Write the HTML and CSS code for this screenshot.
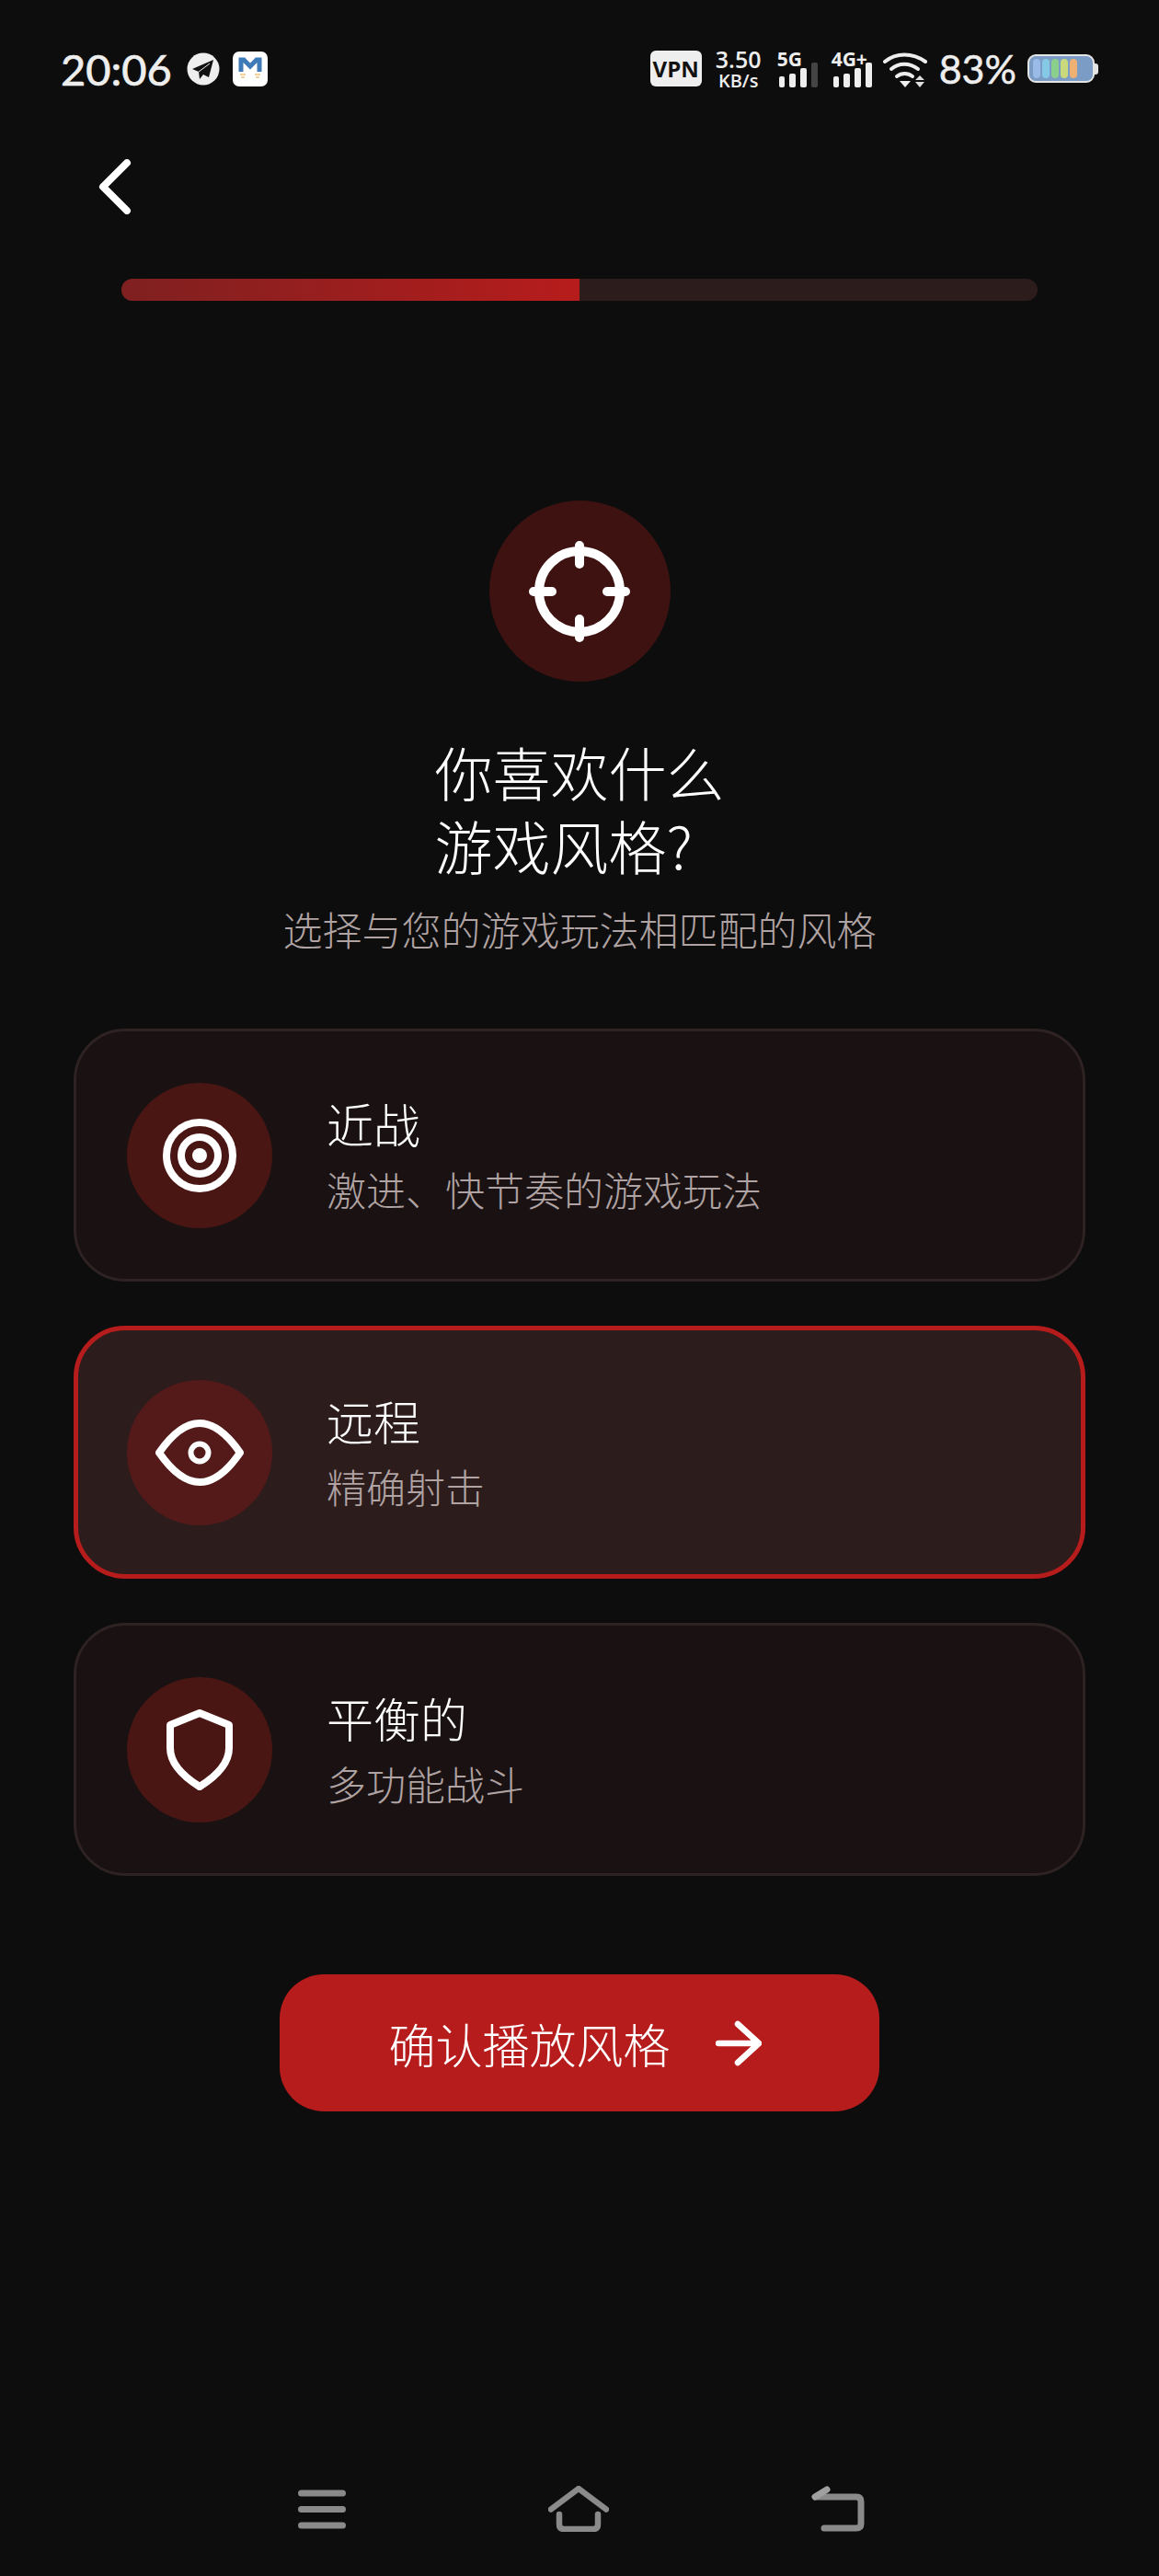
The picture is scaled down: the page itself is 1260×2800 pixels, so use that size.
FILE: index.html
```html
<!DOCTYPE html>
<html>
<head>
  <title>游戏风格</title>
  <meta charset="UTF-8">
  <link rel="stylesheet" href="styles.css">
</head>
<body>
  <div class="page">
    <div class="status-bar">
      <span class="time">20:06</span>
      <svg class="tg-icon" viewBox="0 0 36 36">
        <circle cx="18" cy="18" r="17.5" fill="#eee"/>
        <path d="M29 8 L6 18 L13 21 L14 29 L18 24 L24 27 Z" fill="#111"/>
        <path d="M13 21 L25 12" stroke="#eee" stroke-width="1" fill="none"/>
      </svg>
      <svg class="m-icon" viewBox="0 0 38 38">
        <rect width="38" height="38" rx="7" fill="#fff"/>
        <path d="M9 22 V9 H12 L19 16 L26 9 H29 V22" stroke="#3f7ab8" stroke-width="5" fill="none"/>
        <path d="M8 25 H14 M9 28 H13 M24 25 H30 M25 28 H29" stroke="#e8a838" stroke-width="1.2"/>
      </svg>
      <div class="status-right">
        <span class="vpn">VPN</span>
        <div class="speed"><b>3.50</b><small>KB/s</small></div>
        <div class="signal sig-5g">
          <span class="sig-label">5G</span>
          <i class="b1"></i><i class="b2"></i><i class="b3"></i><i class="b4 off"></i>
        </div>
        <div class="signal sig-4g">
          <span class="sig-label">4G+</span>
          <i class="b1"></i><i class="b2"></i><i class="b3"></i><i class="b4"></i>
        </div>
        <svg class="wifi" viewBox="0 0 50 38">
          <g fill="none" stroke="#eee" stroke-width="4" stroke-linecap="round">
            <path d="M2 10 C14 0 32 0 46 10"/>
            <path d="M9 18 C17 11 29 11 38 18"/>
            <path d="M15 26 C20 22 27 22 32 26"/>
          </g>
          <path d="M18 31 H30 L24 38 Z" fill="#eee"/>
          <path d="M40 25 L45 30 H35 Z M35 32 H45 L40 38 Z" fill="#ddd"/>
        </svg>
        <span class="batt-text">83%</span>
        <div class="battery">
          <div class="batt-body">
            <i class="c1"></i><i class="c2"></i><i class="c3"></i><i class="c4"></i><i class="c5"></i>
          </div>
          <div class="batt-cap"></div>
        </div>
      </div>
    </div>

    <div class="back-row">
      <svg class="back" viewBox="0 0 36 60">
        <path d="M31 4 L5 30 L31 56" fill="none" stroke="#fff" stroke-width="8" stroke-linecap="round" stroke-linejoin="round"/>
      </svg>
    </div>

    <div class="progress"><div class="progress-fill"></div></div>

    <div class="hero-icon">
      <svg width="110" height="110" viewBox="0 0 110 110">
        <g fill="none" stroke="#fff" stroke-width="10" stroke-linecap="round">
          <circle cx="55" cy="55" r="44"/>
          <path d="M5 55 H25 M85 55 H105 M55 5 V25 M55 85 V105"/>
        </g>
      </svg>
    </div>

    <h1 class="title">你喜欢什么<br>游戏风格?</h1>
    <p class="subtitle">选择与您的游戏玩法相匹配的风格</p>

    <div class="options">
      <div class="option">
        <div class="option-icon">
          <svg width="80" height="80" viewBox="0 0 80 80">
            <g fill="none" stroke="#fff" stroke-width="8">
              <circle cx="40" cy="40" r="36"/>
              <circle cx="40" cy="40" r="20"/>
            </g>
            <circle cx="40" cy="40" r="8" fill="#fff"/>
          </svg>
        </div>
        <div class="option-text">
          <div class="option-name">近战</div>
          <div class="option-desc">激进、快节奏的游戏玩法</div>
        </div>
      </div>

      <div class="option selected">
        <div class="option-icon">
          <svg width="96" height="72" viewBox="0 0 96 72">
            <path d="M4 36 C20 13 35 4 48 4 C61 4 76 13 92 36 C76 59 61 68 48 68 C35 68 20 59 4 36 Z" fill="none" stroke="#fff" stroke-width="8" stroke-linejoin="round"/>
            <circle cx="48" cy="36" r="9.500" fill="none" stroke="#fff" stroke-width="6"/>
          </svg>
        </div>
        <div class="option-text">
          <div class="option-name">远程</div>
          <div class="option-desc">精确射击</div>
        </div>
      </div>

      <div class="option">
        <div class="option-icon">
          <svg width="72" height="88" viewBox="0 0 72 88">
            <path d="M36 4 L68 17 V42 C68 60 52 74 36 84 C20 74 4 60 4 42 V17 Z" fill="none" stroke="#fff" stroke-width="8" stroke-linejoin="round"/>
          </svg>
        </div>
        <div class="option-text">
          <div class="option-name">平衡的</div>
          <div class="option-desc">多功能战斗</div>
        </div>
      </div>
    </div>

    <div class="confirm">
      <span>确认播放风格</span>
      <svg width="50" height="50" viewBox="0 0 50 50">
        <path d="M3 25 H46 M24 4 L47 25 L24 46" fill="none" stroke="#fff" stroke-width="6.500" stroke-linecap="round" stroke-linejoin="round"/>
      </svg>
    </div>

    <div class="nav-bar">
      <svg width="52" height="44" viewBox="0 0 52 44">
        <path d="M3.500 4 H48.500 M3.500 21.500 H48.500 M3.500 39 H48.500" stroke="#8a8a8a" stroke-width="7" stroke-linecap="round"/>
      </svg>
      <svg width="66" height="50" viewBox="0 0 66 50">
        <g fill="none" stroke="#8a8a8a" stroke-width="6.500" stroke-linecap="round" stroke-linejoin="round">
          <path d="M3 25.500 L33 3 L63 25.500"/>
          <path d="M12 31 V42 Q12 47 17 47 H49 Q54 47 54 42 V31"/>
        </g>
      </svg>
      <svg width="58" height="50" viewBox="0 0 58 50">
        <g fill="none" stroke="#8a8a8a" stroke-width="7" stroke-linecap="round" stroke-linejoin="round">
          <path d="M5 12 H49 Q54 12 54 17 V41 Q54 46 49 46 H14"/>
          <path d="M4 12 L17 4" stroke="#a0a0a0"/>
        </g>
      </svg>
    </div>
  </div>
</body>
</html>
```

FILE: styles.css
```css
* {
  box-sizing: border-box;
}
body {
  margin: 0;
  background: #0d0d0d;
  color: #fff;
  font-family: "Noto Sans CJK SC", "Noto Sans", sans-serif;
}
.page {
  width: 1260px;
  height: 2800px;
  display: flex;
  flex-direction: column;
  align-items: center;
}

/* status bar */
.status-bar {
  width: 100%;
  height: 148px;
  padding: 55px 66px 0 66px;
  display: flex;
  align-items: flex-start;
  color: #eee;
}
.time {
  font-family: Lato, sans-serif;
  font-size: 47px;
  font-weight: 400;
  -webkit-text-stroke: 0.7px #eee;
  line-height: 40px;
  width: 137px;
}
.tg-icon {
  width: 36px;
  height: 36px;
  margin-top: 2px;
}
.m-icon {
  width: 38px;
  height: 38px;
  margin-left: 14px;
  margin-top: 1px;
}
.status-right {
  margin-left: auto;
  display: flex;
  align-items: flex-start;
}
.vpn {
  width: 56px;
  height: 39px;
  background: #eee;
  color: #111;
  border-radius: 6px;
  font-family: "Open Sans", sans-serif;
  font-size: 24px;
  font-weight: 700;
  line-height: 39px;
  text-align: center;
}
.speed {
  width: 50px;
  margin-left: 15px;
  margin-top: -5px;
  text-align: center;
  font-family: "Open Sans", sans-serif;
  display: flex;
  flex-direction: column;
  align-items: center;
}
.speed b {
  font-size: 25px;
  line-height: 28px;
  font-weight: 600;
}
.speed small {
  font-size: 20px;
  line-height: 20px;
  font-weight: 600;
}
.signal {
  position: relative;
  height: 40px;
  display: flex;
  align-items: flex-end;
  gap: 5px;
}
.sig-5g {
  margin-left: 17px;
  width: 44px;
  padding-left: 2px;
}
.sig-4g {
  margin-left: 15px;
  width: 44px;
  padding-left: 2px;
}
.sig-label {
  position: absolute;
  left: 0;
  top: -1px;
  font-family: "Open Sans", sans-serif;
  font-size: 21px;
  font-weight: 700;
  line-height: 20px;
}
.signal i {
  display: block;
  width: 7px;
  background: #eee;
  border-radius: 2px;
}
.signal .b1 { height: 12px; }
.signal .b2 { height: 15px; }
.signal .b3 { height: 21px; }
.signal .b4 { height: 27px; }
.signal .off { background: #444; }
.wifi {
  width: 50px;
  height: 38px;
  margin-left: 12px;
  margin-top: 2px;
}
.batt-text {
  font-family: Lato, sans-serif;
  font-size: 43px;
  font-weight: 400;
  -webkit-text-stroke: 0.5px #eee;
  line-height: 40px;
  margin-left: 11px;
}
.battery {
  display: flex;
  align-items: center;
  margin-left: 12px;
  margin-top: 4px;
}
.batt-body {
  width: 73px;
  height: 31px;
  border: 2px solid #e4e4e4;
  border-radius: 9px;
  background: #7b9cc4;
  padding: 3px 4px;
  display: flex;
  gap: 2px;
}
.batt-body i {
  display: block;
  width: 8px;
  border-radius: 4px;
}
.batt-body .c1 { background: #9abbe8; }
.batt-body .c2 { background: #86c9e6; }
.batt-body .c3 { background: #8ad08c; }
.batt-body .c4 { background: #c9d97c; }
.batt-body .c5 { background: #efb173; }
.batt-cap {
  width: 4px;
  height: 12px;
  background: #e4e4e4;
  border-radius: 0 3px 3px 0;
}

.back-row {
  width: 100%;
  padding-left: 107px;
  height: 155px;
  padding-top: 25px;
}
.back {
  width: 36px;
  height: 60px;
  display: block;
}

.progress {
  width: 996px;
  height: 24px;
  background: #2d1c1c;
  border-radius: 12px;
  overflow: hidden;
}
.progress-fill {
  width: 50%;
  height: 100%;
  background: linear-gradient(90deg, #7f2020, #b71c1c);
}

.hero-icon {
  width: 197px;
  height: 197px;
  margin-top: 217px;
  border-radius: 50%;
  background: #3f1212;
  display: flex;
  align-items: center;
  justify-content: center;
}
.title {
  margin: 57px 0 0 0;
  font-size: 63px;
  font-weight: 300;
  line-height: 80px;
  text-align: left;
}
.subtitle {
  margin: 20px 0 0 0;
  font-size: 43px;
  font-weight: 300;
  line-height: 62px;
  color: #b0a3a3;
}

.options {
  width: 1100px;
  margin-top: 78px;
  display: flex;
  flex-direction: column;
  gap: 48px;
}
.option {
  height: 275px;
  padding-left: 55px;
  display: flex;
  align-items: center;
  gap: 59px;
  background: #1a1212;
  border: 3px solid #2e2222;
  border-radius: 56px;
}
.option.selected {
  background: #2d1c1c;
  border: 5px solid #b71c1c;
  padding-left: 53px;
}
.option-icon {
  width: 158px;
  height: 158px;
  border-radius: 50%;
  background: #4a1614;
  display: flex;
  align-items: center;
  justify-content: center;
}
.selected .option-icon {
  background: #541a1a;
}
.option-text {
  padding-bottom: 6px;
}
.option-name {
  font-size: 51px;
  font-weight: 300;
  line-height: 76px;
}
.option-desc {
  margin-top: 3px;
  font-size: 43px;
  font-weight: 300;
  line-height: 60px;
  color: #b0a3a3;
}

.confirm {
  width: 652px;
  height: 149px;
  margin-top: 107px;
  padding-right: 10px;
  background: #b71c1c;
  border-radius: 48px;
  display: flex;
  align-items: center;
  justify-content: center;
  gap: 49px;
  font-size: 51px;
  font-weight: 300;
}

.nav-bar {
  width: 100%;
  margin-top: auto;
  height: 98px;
  padding: 0 320px 0 324px;
  display: flex;
  justify-content: space-between;
  align-items: flex-start;
}
.nav-bar svg:first-child {
  margin-top: 4px;
}
```
